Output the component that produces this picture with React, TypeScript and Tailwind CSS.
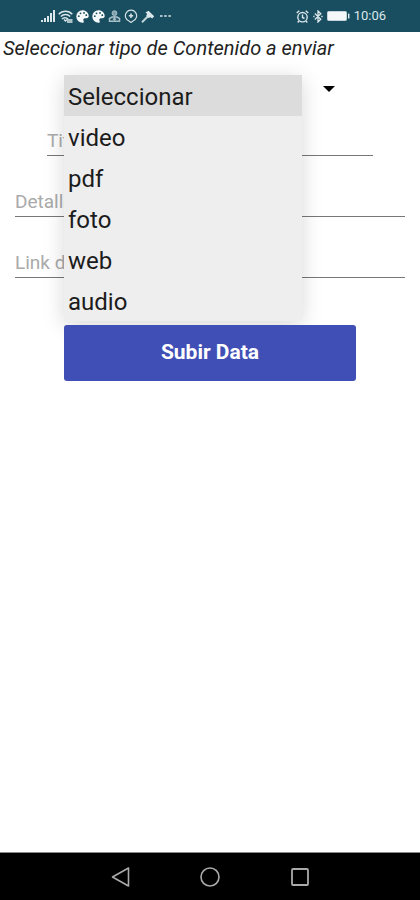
import { useState } from "react";

const options = ["Seleccionar", "video", "pdf", "foto", "web", "audio"];

function Signal() {
  return (
    <svg width="14" height="12" viewBox="0 0 14 12" fill="#dbe7ea" aria-hidden="true">
      <path d="M0 12v-2h2v2zM3 12V8h2v4zM6 12V6h2v6zM9 12V3h2v9zM12 12V0h2v12z" />
    </svg>
  );
}

function Wifi() {
  return (
    <svg width="15" height="13" viewBox="0 0 15 13" fill="none" stroke="#dbe7ea" strokeWidth="1.4" aria-hidden="true">
      <path d="M.7 4.2C4.5.2 10.5.2 14.3 4.2M2.8 6.5c2.7-2.7 6.7-2.7 9.4 0M4 9c1.5-1.700 4.500-1.700 6 0" />
      <path d="M6 9.500L7.500 11 9 9.500M9 10h5.500M9 12h5.500" strokeWidth="1.300" />
    </svg>
  );
}

function Palette() {
  return (
    <svg width="13" height="13" viewBox="0 0 13 13" aria-hidden="true">
      <path fill="#f4f8f9" d="M6.500.3a6.200 6.200 0 1 0 0 12.400c1.300 0 1.600-1 1.100-1.800-.8-1.400 0-2.700 1.500-2.700h1.500c1.300 0 2.100-.9 2.100-2.200C12.700 2.800 9.900.3 6.500.3z" />
      <g fill="#184e60">
        <circle cx="2.800" cy="6.200" r=".9" />
        <circle cx="4.500" cy="3.300" r=".9" />
        <circle cx="8" cy="2.900" r=".9" />
        <circle cx="10.300" cy="5.200" r=".9" />
      </g>
    </svg>
  );
}

function Person() {
  return (
    <svg width="13" height="12" viewBox="0 0 13 12" fill="none" stroke="#a9c1c9" aria-hidden="true">
      <circle cx="6.500" cy="3.200" r="2.400" fill="#7fa0ab" />
      <path d="M1.500 11.300V8.500L4 7h5l2.500 1.500v2.800z" strokeWidth="1.500" />
      <path d="M6.500 6v4M4.800 8.600l1.700 1.600 1.700-1.600" strokeWidth="1.200" />
    </svg>
  );
}

function Pin() {
  return (
    <svg width="14" height="14" viewBox="0 0 14 14" fill="none" stroke="#d3e1e5" strokeWidth="1.200" aria-hidden="true">
      <path d="M5 12a5.600 5.600 0 1 1 4 0l-2 1.500z" />
      <path d="M7 4.500v4.400M4.800 6.700h4.400" strokeWidth="1.600" />
    </svg>
  );
}

function Hammer() {
  return (
    <svg width="14" height="13" viewBox="0 0 14 13" aria-hidden="true">
      <path d="M1 12.300l6-6" stroke="#c3d5db" strokeWidth="2" />
      <path d="M4.500 2.500L7.500.8l5.700 5.400-2 2.300-1.700-1.200-2 .8-2.300-2.300 1-1.700z" fill="#dbe7ea" />
    </svg>
  );
}

function Alarm() {
  return (
    <svg width="13" height="13" viewBox="0 0 13 13" fill="none" stroke="#dbe7ea" strokeWidth="1.400" aria-hidden="true">
      <circle cx="6.500" cy="7.200" r="4.700" />
      <path d="M.7 3L3.300.8M12.300 3L9.700.8M6.500 4.500v3l2 1M3 11l-1.300 1.500M10 11l1.300 1.500" />
    </svg>
  );
}

function Bluetooth() {
  return (
    <svg width="10" height="13" viewBox="0 0 10 13" fill="none" stroke="#dbe7ea" strokeWidth="1.300" aria-hidden="true">
      <path d="M1.800 3.500l6 5.700L5 12V1l2.800 2.800-6 5.700M.3 6.500h1.300M8.300 6.500h1.400" />
    </svg>
  );
}

function Battery() {
  return (
    <svg width="23" height="10" viewBox="0 0 23 10" aria-hidden="true">
      <rect x=".5" y=".5" width="19" height="9" rx="1" fill="#f4f8f9" stroke="#c3d5db" />
      <rect x="21" y="2.500" width="1.500" height="5" rx=".5" fill="#dbe7ea" />
    </svg>
  );
}

function StatusBar() {
  return (
    <header className="flex h-8 items-center justify-between bg-[#184e60] pl-[41px] pr-[34px]">
      <div className="flex items-center gap-[3px]">
        <Signal />
        <Wifi />
        <Palette />
        <Palette />
        <Person />
        <Pin />
        <Hammer />
        <svg className="ml-0.5" width="11" height="2" viewBox="0 0 11 2" fill="#a9c1c9" aria-hidden="true">
          <path d="M0 0h2.500v2H0zM4.200 0h2.500v2H4.200zM8.400 0h2.500v2H8.400z" />
        </svg>
      </div>
      <div className="flex items-center gap-1">
        <Alarm />
        <Bluetooth />
        <Battery />
        <time className="text-[13px] leading-4 text-[#dbe7ea]">10:06</time>
      </div>
    </header>
  );
}

function Field({ label, className }: { label: string; className: string }) {
  return (
    <div className={"flex " + className}>
      <input
        type="text"
        aria-label={label}
        placeholder={label}
        className="h-8 w-full min-w-0 border-b border-[#777] bg-transparent pt-0.5 text-[19px] leading-6 outline-none placeholder:text-[#aaa]"
      />
    </div>
  );
}

export default function App() {
  const [open, setOpen] = useState(true);
  const [selected, setSelected] = useState(0);

  return (
    <div className="flex min-h-screen flex-col bg-white font-[Roboto,sans-serif] text-[#1c1c1c]">
      <StatusBar />
      <main className="flex flex-1 flex-col">
        <h1 className="h-8 pl-[3px] text-xl/8 italic text-[#222]">
          Seleccionar tipo de Contenido a enviar
        </h1>

        <div className="relative mx-16">
          <button
            type="button"
            aria-label="Tipo de contenido"
            aria-haspopup="listbox"
            aria-expanded={open}
            onClick={() => setOpen(!open)}
            className="flex h-[50px] w-full items-center justify-between pl-1 pr-[21px] text-2xl"
          >
            <span>{open ? "" : options[selected]}</span>
            <svg width="12" height="6" viewBox="0 0 12 6" fill="#000" aria-hidden="true">
              <path d="M0 0h12L6 6z" />
            </svg>
          </button>
          {open && (
            <div
              role="listbox"
              aria-label="Tipo de contenido"
              className="absolute left-0 top-[11px] z-10 w-[238px] bg-[#eee] shadow-[0_4px_20px_rgba(0,0,0,0.16)]"
            >
              {options.map((option, i) => (
                <button
                  key={option}
                  type="button"
                  role="option"
                  aria-selected={i === selected}
                  onClick={() => {
                    setSelected(i);
                    setOpen(false);
                  }}
                  className={
                    "block h-[41px] w-full pl-1 pt-0.5 text-left text-2xl " +
                    (i === selected ? "bg-[#dcdcdc]" : "bg-[#eee]")
                  }
                >
                  {option}
                </button>
              ))}
            </div>
          )}
        </div>

        <form className="flex flex-col pt-[10px]" onSubmit={(e) => e.preventDefault()}>
          <div className="flex flex-col gap-[29px]">
            <Field label="Titulo" className="mx-[47px]" />
            <Field label="Detalle" className="mx-[15px]" />
            <Field label="Link de" className="mx-[15px]" />
          </div>
          <button
            type="submit"
            className="relative z-20 mx-16 mt-[47px] h-14 rounded-[3px] bg-[#3f4fb5] text-[21px] font-bold text-white"
          >
            Subir Data
          </button>
        </form>
      </main>

      <nav className="flex h-12 items-center justify-center gap-[68px] border-t border-[#888] bg-black">
        <button type="button" aria-label="Atrás">
          <svg width="22" height="22" viewBox="0 0 22 22" fill="none" stroke="#aaa" strokeWidth="1.600" strokeLinejoin="round">
            <path d="M3.500 11L19.500 2v18z" />
          </svg>
        </button>
        <button type="button" aria-label="Inicio">
          <svg width="22" height="22" viewBox="0 0 22 22" fill="none" stroke="#aaa" strokeWidth="1.600">
            <circle cx="11" cy="11" r="9" />
          </svg>
        </button>
        <button type="button" aria-label="Recientes">
          <svg width="22" height="22" viewBox="0 0 22 22" fill="none" stroke="#aaa" strokeWidth="1.800">
            <rect x="3" y="3" width="16" height="16" rx="1" />
          </svg>
        </button>
      </nav>
    </div>
  );
}
